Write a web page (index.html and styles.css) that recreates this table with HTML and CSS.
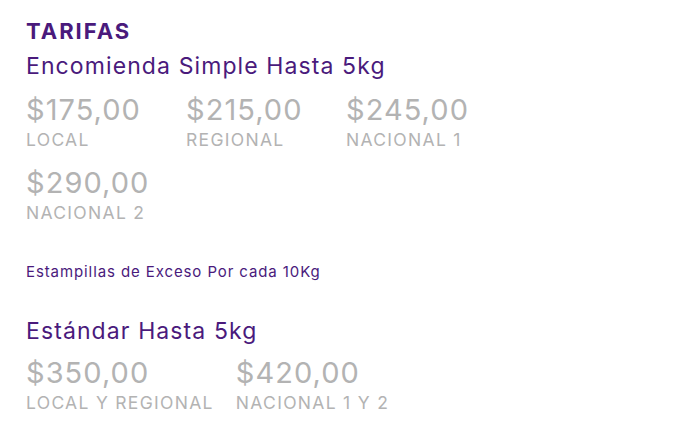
FILE: index.html
```
<!DOCTYPE html>
<html lang="es"><head><meta charset="utf-8"><link rel="stylesheet" href="styles.css"></head>
<body>
<div class="tarifas">
  <h1 class="title">TARIFAS</h1>
  <h2 class="subtitle">Encomienda Simple Hasta 5kg</h2>
  <div class="rates">
    <div class="rate"><div class="price">$175,00</div><div class="label">LOCAL</div></div>
    <div class="rate"><div class="price">$215,00</div><div class="label">REGIONAL</div></div>
    <div class="rate"><div class="price">$245,00</div><div class="label">NACIONAL 1</div></div>
    <div class="rate"><div class="price">$290,00</div><div class="label">NACIONAL 2</div></div>
  </div>
  <p class="note">Estampillas de Exceso Por cada 10Kg</p>
  <h2 class="subtitle subtitle-2">Estándar Hasta 5kg</h2>
  <div class="rates rates-2">
    <div class="rate"><div class="price">$350,00</div><div class="label">LOCAL Y REGIONAL</div></div>
    <div class="rate"><div class="price">$420,00</div><div class="label">NACIONAL 1 Y 2</div></div>
  </div>
</div>
</body></html>
```
FILE: styles.css
```
html,body{margin:0;padding:0;background:#fff}
body{font-family:"Inter","Liberation Sans",sans-serif}
.tarifas{padding:18px 26px 0;max-width:500px}
.title{margin:0;font-size:22px;line-height:26px;font-weight:700;color:#4a1a7c;letter-spacing:2px}
.subtitle{margin:9px 0 0;font-size:23px;line-height:26px;font-weight:400;color:#4a1a7c;letter-spacing:1.1px}
.rates{display:flex;flex-wrap:wrap;row-gap:17px;margin-top:15px}
.rate{min-width:138px;margin-right:22px;display:flex;flex-direction:column;gap:4px}
.price{font-size:29px;line-height:32px;color:#b3b3b3;letter-spacing:1.05px}
.label{font-size:17.5px;line-height:20px;color:#b3b3b3;letter-spacing:1.3px}
.note{margin:40px 0 0;font-size:15px;line-height:18px;color:#4a1a7c;letter-spacing:0.9px}
.subtitle-2{margin-top:37px}
.rates-2{margin-top:13px}
```
